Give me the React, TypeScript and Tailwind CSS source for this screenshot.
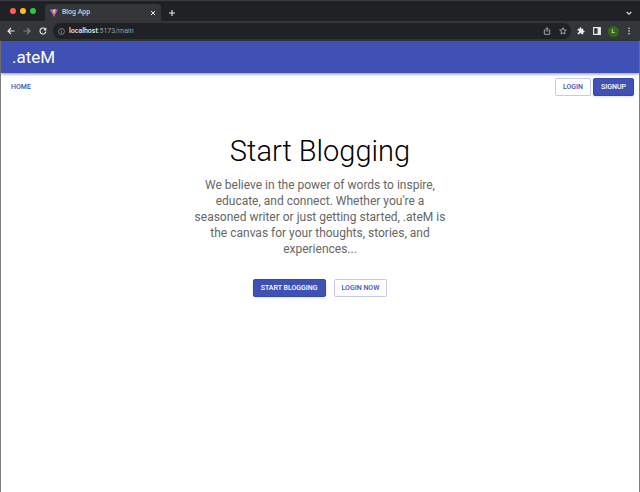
import React from "react";
import type { ReactNode } from "react";

const chromeButton = "flex h-4 w-4 shrink-0 items-center justify-center";
const action =
  "flex h-[18px] items-center justify-center rounded-[2px] border px-[7px] text-[7px] leading-none font-medium whitespace-nowrap";
const filled = "border-[#3549a9] bg-[#3f51b5] text-white shadow-sm";
const outlined = "border-[#c5caec] bg-white text-[#3f51b5]";

function ToolButton({ label, children }: { label: string; children: ReactNode }) {
  return (
    <button type="button" aria-label={label} className={chromeButton}>
      {children}
    </button>
  );
}

function ViteLogo() {
  return (
    <svg viewBox="0 0 16 16" className="h-2 w-2 shrink-0" aria-hidden="true">
      <defs>
        <linearGradient id="shield" x1="0" y1="0" x2="1" y2="1">
          <stop offset="0" stopColor="#41b1ff" />
          <stop offset="0.6" stopColor="#bd34fe" />
        </linearGradient>
        <linearGradient id="bolt" x1="0" y1="0" x2="0" y2="1">
          <stop offset="0" stopColor="#ffd93a" />
          <stop offset="1" stopColor="#ffa800" />
        </linearGradient>
      </defs>
      <path d="M15.8 1.500 8.500 15.600a.6.6 0 0 1-1 0L.1 1.500a.6.6 0 0 1 .6-.9L8 1.900l7.200-1.300a.6.6 0 0 1 .6.9Z" fill="url(#shield)" />
      <path d="m11.500 0-5.400 1-.4 5.800 1.800-.4-.5 2.500 1.300-.4-.9 4.500 4-7.800-1.800.3.9-2.400Z" fill="url(#bolt)" />
    </svg>
  );
}

function TabStrip() {
  return (
    <div className="flex h-[21px] items-end border-t border-[#3b3c3f] bg-[#202124]">
      <div className="flex h-full w-[45px] shrink-0 items-center gap-1 pl-[10px]">
        <span className="h-[6px] w-[6px] rounded-full bg-[#ff5f57]" />
        <span className="h-[6px] w-[6px] rounded-full bg-[#febc2e]" />
        <span className="h-[6px] w-[6px] rounded-full bg-[#28c840]" />
      </div>
      <div className="flex h-[17px] w-[116px] shrink-0 items-center rounded-t-[4px] bg-[#35363a] pr-1 pl-[5px] text-[7px] text-[#e8eaed]">
        <ViteLogo />
        <span className="grow pl-1">Blog App</span>
        <button type="button" aria-label="Close tab" className="flex h-2 w-2 items-center justify-center">
          <svg viewBox="0 0 8 8" className="h-2 w-2" stroke="#e8eaed" strokeWidth="1" fill="none">
            <path d="m2 2 4 4m0-4L2 6" />
          </svg>
        </button>
      </div>
      <div className="flex h-[17px] grow items-center justify-between pr-[3px] pl-[3px]">
        <ToolButton label="New tab">
          <svg viewBox="0 0 8 8" className="h-2 w-2" stroke="#e8eaed" strokeWidth="1.1" fill="none">
            <path d="M4 1v6M1 4h6" />
          </svg>
        </ToolButton>
        <ToolButton label="Search tabs">
          <svg viewBox="0 0 8 8" className="h-2 w-2" stroke="#e8eaed" strokeWidth="1.1" fill="none">
            <path d="m1.700 3 2.300 2.300L6.300 3" />
          </svg>
        </ToolButton>
      </div>
    </div>
  );
}

function Toolbar() {
  return (
    <div className="flex h-5 items-center bg-[#35363a] pr-[3px] pl-[3px]">
      <ToolButton label="Back">
        <svg viewBox="0 0 8 8" className="h-2 w-2" stroke="#e8eaed" strokeWidth="1.1" fill="none">
          <path d="M7.500 4H1m3-3L1 4l3 3" />
        </svg>
      </ToolButton>
      <ToolButton label="Forward">
        <svg viewBox="0 0 8 8" className="h-2 w-2" stroke="#85878a" strokeWidth="1.1" fill="none">
          <path d="M.5 4H7M4 1l3 3-3 3" />
        </svg>
      </ToolButton>
      <ToolButton label="Reload">
        <svg viewBox="0 0 8 8" className="h-2 w-2" stroke="#e8eaed" strokeWidth="1.1" fill="none">
          <path d="M6.300 2.100A3 3 0 1 0 6.900 4.700" />
          <path d="M7.400.5v3.100H4.300Z" fill="#e8eaed" stroke="none" />
        </svg>
      </ToolButton>
      <div className="ml-[2px] flex h-4 min-w-0 grow items-center rounded-full bg-[#202124] pl-[5px]">
        <svg viewBox="0 0 8 8" className="h-[7px] w-[7px] shrink-0" stroke="#9aa0a6" strokeWidth=".8" fill="none" aria-hidden="true">
          <circle cx="4" cy="4" r="3.400" />
          <path d="M4 3.600V6M4 2v.9" />
        </svg>
        <div className="grow pl-1 text-[7px] leading-none text-[#9aa0a6]">
          <span className="font-medium text-[#e8eaed]">localhost</span>:5173/main
        </div>
        <ToolButton label="Share">
          <svg viewBox="0 0 8 8" className="h-2 w-2" stroke="#bdc1c6" strokeWidth=".8" fill="none">
            <path d="M2.800 3H1.300v4.300h5.400V3H5.200M4 5V.8M2.600 2.100 4 .7l1.400 1.400" />
          </svg>
        </ToolButton>
        <ToolButton label="Bookmark">
          <svg viewBox="0 0 8 8" className="h-2 w-2" stroke="#bdc1c6" strokeWidth=".8" fill="none">
            <path d="m4 .8.9 2.100 2.400.2-1.800 1.600.5 2.400L4 5.800 2 7.100l.5-2.400L.7 3.100l2.400-.2Z" />
          </svg>
        </ToolButton>
      </div>
      <div className="flex items-center pl-[2px]">
        <ToolButton label="Extensions">
          <svg viewBox="0 0 24 24" className="h-2 w-2" fill="#e8eaed">
            <path d="M20.500 11H19V7a2 2 0 0 0-2-2h-4V3.500a2.500 2.500 0 0 0-5 0V5H4a2 2 0 0 0-2 2v3.800h1.500a2.700 2.700 0 0 1 0 5.400H2V20a2 2 0 0 0 2 2h3.800v-1.500a2.700 2.700 0 0 1 5.400 0V22H17a2 2 0 0 0 2-2v-4h1.500a2.500 2.500 0 0 0 0-5Z" />
          </svg>
        </ToolButton>
        <ToolButton label="Side panel">
          <svg viewBox="0 0 8 8" className="h-2 w-2">
            <path d="M.6.600h6.800v6.800H.6Z" fill="none" stroke="#e8eaed" strokeWidth="1.100" />
            <path d="M4.600 1H7v6H4.600Z" fill="#e8eaed" />
          </svg>
        </ToolButton>
        <ToolButton label="Profile">
          <span className="flex h-[11px] w-[11px] items-center justify-center rounded-full bg-[#33691e] text-[6px] leading-none text-white">
            L
          </span>
        </ToolButton>
        <ToolButton label="Menu">
          <svg viewBox="0 0 8 8" className="h-2 w-2" fill="#e8eaed">
            <circle cx="4" cy="1.200" r=".8" />
            <circle cx="4" cy="4" r=".8" />
            <circle cx="4" cy="6.800" r=".8" />
          </svg>
        </ToolButton>
      </div>
    </div>
  );
}

export default function App() {
  return (
    <div className="flex min-h-screen flex-col bg-[#202124] font-['Roboto',sans-serif]">
      <TabStrip />
      <Toolbar />
      <div className="flex grow flex-col border-x border-[#808080] bg-white">
        <header className="flex h-8 items-center bg-[#3f51b5] px-[11px] shadow-[0_1px_3px_rgba(0,0,0,0.45)]">
          <span className="text-[17px] leading-none text-white">.ateM</span>
        </header>
        <nav className="flex h-7 items-center justify-between pr-[5px] pl-[10px]">
          <a href="#home" className="text-[7px] leading-none font-medium text-[#3f51b5]">
            HOME
          </a>
          <div className="flex gap-[2px]">
            <button type="button" className={`${action} ${outlined}`}>
              LOGIN
            </button>
            <button type="button" className={`${action} ${filled}`}>
              SIGNUP
            </button>
          </div>
        </nav>
        <main className="mx-auto flex w-[252px] flex-col items-center pt-8 text-center">
          <h1 className="text-[29px] leading-9 font-light whitespace-nowrap text-black">Start Blogging</h1>
          <p className="pt-2 text-[12px] leading-4 text-[#666666]">
            We believe in the power of words to inspire, educate, and connect. Whether you're a seasoned writer or just
            getting started, .ateM is the canvas for your thoughts, stories, and experiences...
          </p>
          <div className="flex gap-2 pt-[22px]">
            <button type="button" className={`${action} ${filled}`}>
              START BLOGGING
            </button>
            <button type="button" className={`${action} ${outlined}`}>
              LOGIN NOW
            </button>
          </div>
        </main>
      </div>
    </div>
  );
}
